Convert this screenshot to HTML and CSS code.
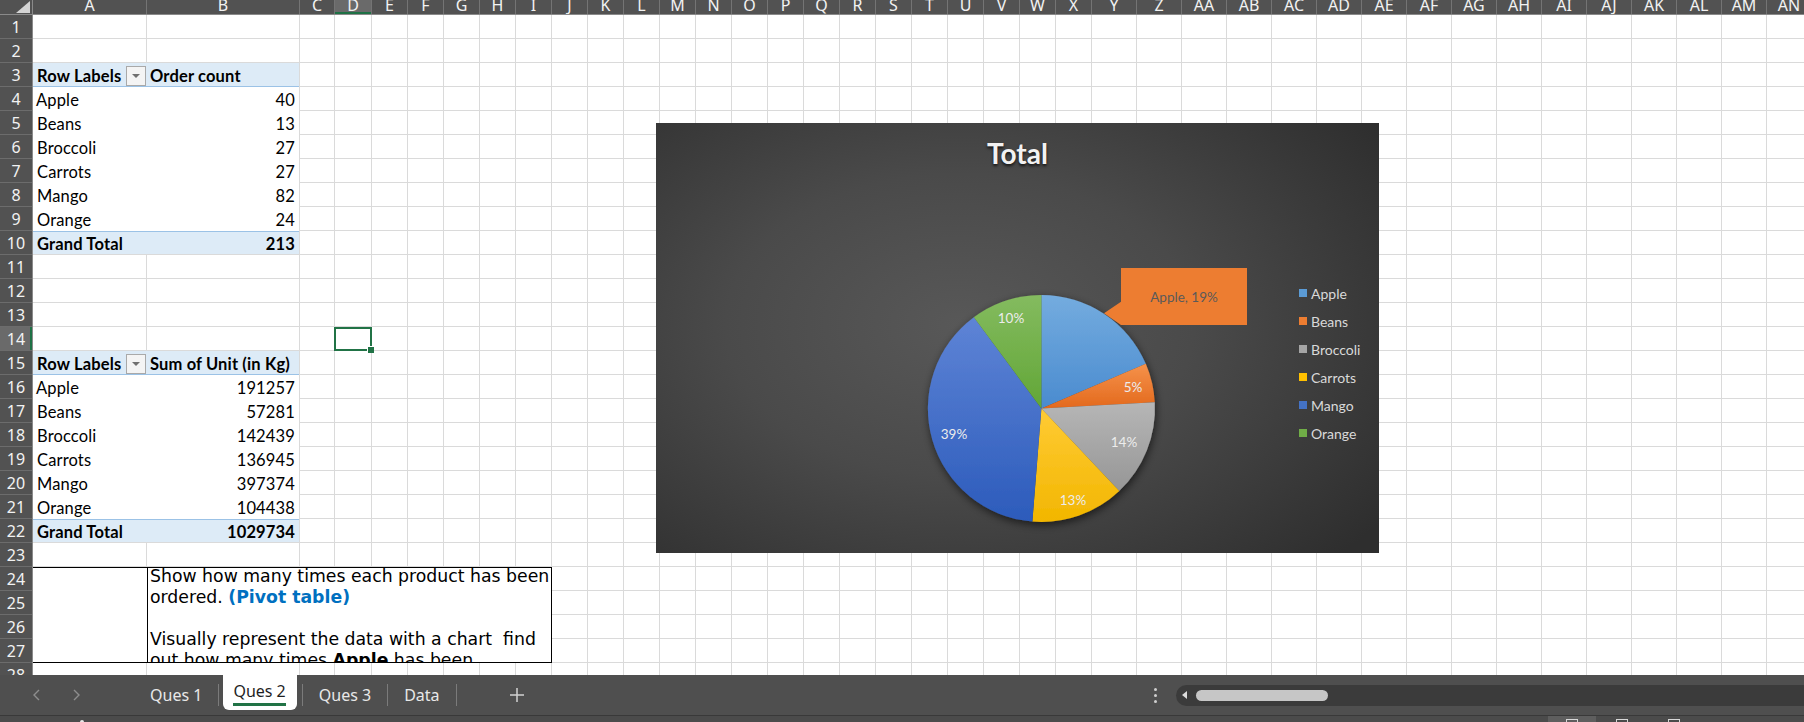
FILE: index.html
```html
<!DOCTYPE html>
<html>
<head>
<meta charset="utf-8">
<title>Ques 2</title>
<link rel="stylesheet" href="styles.css">
</head>
<body>
<div class="app">
  <div class="sheet">
    <div class="corner"><svg width="32" height="14" viewBox="0 0 32 14"><polygon points="16,13 30,13 30,1" fill="#d4d4d4"/></svg></div>
    <div class="colhdr">
      <span>A</span><span>B</span><span>C</span><span class="on">D</span><span>E</span><span>F</span><span>G</span><span>H</span><span>I</span><span>J</span><span>K</span><span>L</span><span>M</span><span>N</span><span>O</span><span>P</span><span>Q</span><span>R</span><span>S</span><span>T</span><span>U</span><span>V</span><span>W</span><span>X</span><span>Y</span><span>Z</span><span>AA</span><span>AB</span><span>AC</span><span>AD</span><span>AE</span><span>AF</span><span>AG</span><span>AH</span><span>AI</span><span>AJ</span><span>AK</span><span>AL</span><span>AM</span><span>AN</span>
    </div>
    <div class="rowhdr">
      <span>1</span><span>2</span><span>3</span><span>4</span><span>5</span><span>6</span><span>7</span><span>8</span><span>9</span><span>10</span><span>11</span><span>12</span><span>13</span><span class="on">14</span><span>15</span><span>16</span><span>17</span><span>18</span><span>19</span><span>20</span><span>21</span><span>22</span><span>23</span><span>24</span><span>25</span><span>26</span><span>27</span><span>28</span>
    </div>
    <div class="gridlines">
      <i></i><i></i><i></i><i></i><i></i><i></i><i></i><i></i><i></i><i></i>
      <i></i><i></i><i></i><i></i><i></i><i></i><i></i><i></i><i></i><i></i>
      <i></i><i></i><i></i><i></i><i></i><i></i><i></i><i></i><i></i><i></i>
      <i></i><i></i><i></i><i></i><i></i><i></i><i></i><i></i><i></i><i></i>
    </div>

    <div class="pivot pv1">
      <div class="c h lbl">Row Labels<span class="dd"></span></div><div class="c h">Order count</div>
      <div class="c">Apple</div><div class="n">40</div>
      <div class="c">Beans</div><div class="n">13</div>
      <div class="c">Broccoli</div><div class="n">27</div>
      <div class="c">Carrots</div><div class="n">27</div>
      <div class="c">Mango</div><div class="n">82</div>
      <div class="c">Orange</div><div class="n">24</div>
      <div class="c t">Grand Total</div><div class="n t">213</div>
    </div>

    <div class="pivot pv2">
      <div class="c h lbl">Row Labels<span class="dd"></span></div><div class="c h">Sum of Unit (in Kg)</div>
      <div class="c">Apple</div><div class="n">191257</div>
      <div class="c">Beans</div><div class="n">57281</div>
      <div class="c">Broccoli</div><div class="n">142439</div>
      <div class="c">Carrots</div><div class="n">136945</div>
      <div class="c">Mango</div><div class="n">397374</div>
      <div class="c">Orange</div><div class="n">104438</div>
      <div class="c t">Grand Total</div><div class="n t">1029734</div>
    </div>

    <div class="note-a"></div>
    <div class="note"><div class="tx">Show how many times each product has been<br>ordered. <b class="pvt">(Pivot table)</b><br> <br>Visually represent the data with a chart  find<br>out how many times <b>Apple</b> has been</div></div>

    <div class="sel"></div>

    <div class="chart">
      <svg class="pie" width="723" height="430" viewBox="0 0 723 430">
        <defs>
          <linearGradient id="gA" x1="0" y1="0" x2="0" y2="1"><stop offset="0" stop-color="#74acdf"/><stop offset="1" stop-color="#4a8bcf"/></linearGradient>
          <linearGradient id="gB" x1="0" y1="0" x2="0" y2="1"><stop offset="0" stop-color="#f5924b"/><stop offset="1" stop-color="#e3691d"/></linearGradient>
          <linearGradient id="gC" x1="0" y1="0" x2="0" y2="1"><stop offset="0" stop-color="#b6b6b6"/><stop offset="1" stop-color="#969696"/></linearGradient>
          <linearGradient id="gD" x1="0" y1="0" x2="0" y2="1"><stop offset="0" stop-color="#ffcb35"/><stop offset="1" stop-color="#f2b600"/></linearGradient>
          <linearGradient id="gE" x1="0" y1="0" x2="0" y2="1"><stop offset="0" stop-color="#5e84d6"/><stop offset="1" stop-color="#2c5bbb"/></linearGradient>
          <linearGradient id="gF" x1="0" y1="0" x2="0" y2="1"><stop offset="0" stop-color="#84bb5f"/><stop offset="1" stop-color="#62a637"/></linearGradient>
          <filter id="sh" x="-25%" y="-25%" width="150%" height="150%"><feDropShadow dx="1" dy="3" stdDeviation="4" flood-color="#000" flood-opacity="0.6"/></filter>
        </defs>
        <g filter="url(#sh)">
          <path d="M385.4 285.4 L385.4 171.9 A113.5 113.5 0 0 1 489.77 240.81 Z" fill="url(#gA)"/>
          <path d="M385.4 285.4 L489.77 240.81 A113.5 113.5 0 0 1 498.73 279.24 Z" fill="url(#gB)"/>
          <path d="M385.4 285.4 L498.73 279.24 A113.5 113.5 0 0 1 463.25 367.99 Z" fill="url(#gC)"/>
          <path d="M385.4 285.4 L463.25 367.99 A113.5 113.5 0 0 1 376.37 398.54 Z" fill="url(#gD)"/>
          <path d="M385.4 285.4 L376.37 398.54 A113.5 113.5 0 0 1 317.87 194.18 Z" fill="url(#gE)"/>
          <path d="M385.4 285.4 L317.87 194.18 A113.5 113.5 0 0 1 385.4 171.9 Z" fill="url(#gF)"/>
        </g>
        <g class="plab">
          <text x="355" y="199.5">10%</text>
          <text x="477" y="268.5">5%</text>
          <text x="468" y="323.8">14%</text>
          <text x="417" y="381.8">13%</text>
          <text x="298" y="315.8">39%</text>
        </g>
        <path d="M465 145 H591 V202 H465 L448 190.3 L465 178.7 Z" fill="#ed7d31"/>
        <text class="clab" x="528" y="179">Apple, 19%</text>
      </svg>
      <div class="ctitle">Total</div>
      <div class="legend">
        <div class="li"><span class="sw swA"></span>Apple</div>
        <div class="li"><span class="sw swB"></span>Beans</div>
        <div class="li"><span class="sw swC"></span>Broccoli</div>
        <div class="li"><span class="sw swD"></span>Carrots</div>
        <div class="li"><span class="sw swE"></span>Mango</div>
        <div class="li"><span class="sw swF"></span>Orange</div>
      </div>
    </div>
  </div>

  <div class="tabbar">
    <div class="nav">
      <svg width="8" height="12" viewBox="0 0 8 12"><polyline points="7,1 2,6 7,11" fill="none" stroke="#8e8e8e" stroke-width="1.4"/></svg>
      <svg width="8" height="12" viewBox="0 0 8 12"><polyline points="1,1 6,6 1,11" fill="none" stroke="#8e8e8e" stroke-width="1.4"/></svg>
    </div>
    <div class="tabs">
      <div class="tab">Ques 1</div>
      <div class="sep"></div>
      <div class="tab active"><span>Ques 2</span></div>
      <div class="sep"></div>
      <div class="tab">Ques 3</div>
      <div class="sep"></div>
      <div class="tab">Data</div>
      <div class="sep"></div>
      <svg class="plus" width="16" height="16" viewBox="0 0 16 16"><path d="M8 1 V15 M1 8 H15" stroke="#d2d2d2" stroke-width="1.5"/></svg>
    </div>
    <div class="hscroll">
      <div class="dots"><i></i><i></i><i></i></div>
      <div class="track">
        <span class="larr"></span>
        <span class="thumb"></span>
      </div>
    </div>
  </div>
  <div class="status">
    <span class="rdy"></span>
    <div class="views">
      <span class="vb on"><i></i></span><span class="vb"><i></i></span><span class="vb"><i></i></span>
    </div>
  </div>
</div>
</body>
</html>
```
FILE: styles.css
```css
* { box-sizing: border-box; margin: 0; padding: 0; }
html, body { width: 1804px; height: 722px; overflow: hidden; background: #ffffff; }
body { font-family: Lato, "Liberation Sans", sans-serif; color: #000; }

.app { display: flex; flex-direction: column; height: 722px; }

.sheet {
  position: relative;
  flex: 0 0 675px;
  height: 675px;
  overflow: hidden;
  display: grid;
  grid-template-columns: 33px 114px 153px 35px 37px repeat(20, 36px) repeat(16, 45px);
  grid-template-rows: 15px repeat(28, 24px);
}

.corner { grid-column: 1; grid-row: 1; background: #525252; border-right: 1px solid #8a8a8a; border-bottom: 1px solid #8a8a8a; }
.corner svg { display: block; }

.colhdr {
  grid-column: 2 / -1; grid-row: 1;
  display: grid;
  grid-template-columns: 114px 153px 35px 37px repeat(20, 36px) repeat(16, 45px);
  background: #525252;
  border-bottom: 1px solid #8a8a8a;
  overflow: hidden;
}
.colhdr span {
  border-right: 1px solid #747474;
  text-align: center;
  color: #f2f2f2;
  font-family: "Noto Sans", sans-serif;
  font-size: 16px;
  line-height: 10px;
  white-space: nowrap;
  overflow: hidden;
}
.colhdr span.on { background: #6a6a6a; box-shadow: inset 0 -2px 0 #1e7145; }

.rowhdr {
  grid-column: 1; grid-row: 2 / -1;
  display: grid;
  grid-template-rows: repeat(28, 24px);
  background: #525252;
  border-right: 1px solid #8a8a8a;
}
.rowhdr span {
  border-bottom: 1px solid #6c6c6c;
  text-align: center;
  color: #f2f2f2;
  font-family: "Noto Sans", sans-serif;
  font-size: 16px;
  line-height: 22px;
  padding-top: 1px;
  overflow: hidden;
}
.rowhdr span.on { background: #6a6a6a; box-shadow: inset -2px 0 0 #1e7145; }

.gridlines {
  grid-column: 2 / -1; grid-row: 2 / -1;
  display: grid;
  grid-template-columns: 114px 153px 35px 37px repeat(20, 36px) repeat(16, 45px);
  background: repeating-linear-gradient(to bottom, transparent 0 23px, #dadada 23px 24px);
}
.gridlines i { border-right: 1px solid #dadada; }

/* pivot tables */
.pivot {
  display: grid;
  grid-template-columns: 114px 152px;
  grid-template-rows: repeat(7, 24px) 23px;
  width: 266px;
  height: 191px;
  align-self: start;
  justify-self: start;
  background: #fff;
  font-size: 16.5px;
  letter-spacing: 0.15px;
}
.pv1 { grid-column: 2 / 4; grid-row: 4 / 12; }
.pv2 { grid-column: 2 / 4; grid-row: 16 / 24; }
.pivot > div { padding: 3px 4px 0 4px; line-height: 20px; white-space: nowrap; overflow: hidden; }
.pivot .c + .c { padding-left: 3px; }
.pivot .n { text-align: right; }
.pivot .h { background: #ddebf7; border-bottom: 1px solid #9bc2e6; font-weight: bold; }
.pivot .t { background: #ddebf7; border-top: 1px solid #9bc2e6; font-weight: bold; padding-top: 2px; }
.pivot .lbl { display: flex; overflow: visible; }
.dd {
  margin-left: auto; margin-right: -3px;
  width: 20px; height: 20px;
  border: 1px solid #a9a9a9;
  background: #f4f4f4;
  display: flex; align-items: center; justify-content: center;
}
.dd::after {
  content: "";
  border-left: 4px solid transparent;
  border-right: 4px solid transparent;
  border-top: 4px solid #707070;
}

/* note box */
.note-a { grid-column: 2 / 3; grid-row: 25 / 29; background: #fff; border-top: 1px solid #000; border-bottom: 1px solid #000; }
.note {
  grid-column: 3 / 11; grid-row: 25 / 29;
  background: #fff;
  border: 1px solid #000;
  overflow: hidden;
  padding-left: 2px;
  font-family: "DejaVu Sans", Verdana, sans-serif;
  font-size: 17.3px;
  line-height: 21px;
  white-space: pre;
  color: #000;
}
.note .tx { margin-top: -2px; }
.pvt { color: #0070c0; }

/* selection */
.sel {
  grid-column: 5; grid-row: 15;
  margin-left: -1px;
  border: 2px solid #217346;
  position: relative;
}
.sel::after {
  content: "";
  position: absolute;
  right: -4px; bottom: -4px;
  width: 6px; height: 6px;
  background: #217346;
  border-left: 1px solid #fff;
  border-top: 1px solid #fff;
}

/* chart */
.chart {
  position: absolute;
  left: 656px; top: 123px;
  width: 723px; height: 430px;
  background: radial-gradient(ellipse 72% 78% at 42% 47%, #585858 0%, #4a4a4a 45%, #2e2e2e 100%);
  font-family: Lato, "Liberation Sans", sans-serif;
}
.pie { position: absolute; left: 0; top: 0; }
.plab text { font-size: 13.5px; fill: #ececec; text-anchor: middle; }
.clab { font-size: 13.5px; fill: #5a5a5a; text-anchor: middle; }
.ctitle {
  position: relative;
  text-align: center;
  padding-top: 14px;
  font-size: 28px;
  line-height: 32px;
  font-weight: bold;
  color: #f2f2f2;
  text-shadow: 0 2px 3px rgba(0, 0, 0, 0.75);
}
.legend {
  position: absolute;
  left: 643px; top: 156px;
  display: flex; flex-direction: column;
}
.li { height: 28px; display: flex; align-items: center; gap: 4px; font-size: 14px; color: #d9d9d9; }
.sw { width: 8px; height: 8px; }
.swA { background: #5b9bd5; }
.swB { background: #ed7d31; }
.swC { background: #a5a5a5; }
.swD { background: #ffc000; }
.swE { background: #4472c4; }
.swF { background: #70ad47; }

/* tab bar */
.tabbar {
  flex: 0 0 40px;
  height: 40px;
  background: #4f4f4f;
  display: flex;
  align-items: center;
  font-family: "Noto Sans", sans-serif;
  font-size: 16px;
}
.nav { flex: 0 0 134px; display: flex; align-items: center; gap: 33px; padding-left: 32px; }
.nav svg { display: block; }
.tabs { display: flex; align-items: center; height: 100%; }
.tab { padding: 0 16px; color: #e8e8e8; white-space: nowrap; }
.sep { width: 1px; height: 22px; background: #7b7b7b; }
.tab.active {
  align-self: flex-start;
  height: 35px;
  margin: 0 5px 0 4px;
  padding: 0 11px 0 10px;
  background: #fff;
  border-radius: 0 0 6px 6px;
  display: flex; align-items: center;
  color: #1f1f1f;
}
.tab.active span { border-bottom: 3px solid #217346; padding-bottom: 1px; }
.plus { margin-left: 52px; display: block; }

.hscroll { margin-left: auto; width: 656px; height: 100%; display: flex; align-items: center; }
.dots { width: 28px; padding-left: 6px; display: flex; flex-direction: column; gap: 3px; }
.dots i { width: 3px; height: 3px; background: #cfcfcf; border-radius: 50%; }
.track {
  flex: 1;
  height: 21px;
  background: #3b3b3b;
  border-radius: 11px 0 0 11px;
  display: flex; align-items: center;
  padding-left: 6px;
}
.larr { width: 0; height: 0; border-top: 4px solid transparent; border-bottom: 4px solid transparent; border-right: 5px solid #dcdcdc; }
.thumb { margin-left: 9px; width: 132px; height: 11px; background: #c6c6c6; border-radius: 6px; }

/* status strip */
.status {
  flex: 0 0 7px;
  height: 7px;
  background: #4b4b4b;
  border-top: 1px solid #393939;
  display: flex;
  overflow: hidden;
}
.rdy { margin: 4px 0 0 80px; width: 4px; height: 4px; border-radius: 50%; background: #e8e8e8; }
.views { margin-left: auto; margin-right: 104px; display: flex; }
.vb { width: 52px; height: 6px; display: flex; justify-content: center; padding-top: 3px; }
.vb.on { background: #5e5e5e; width: 48px; }
.vb i { width: 12px; height: 6px; border: 1.5px solid #d8d8d8; border-bottom: none; }
```
